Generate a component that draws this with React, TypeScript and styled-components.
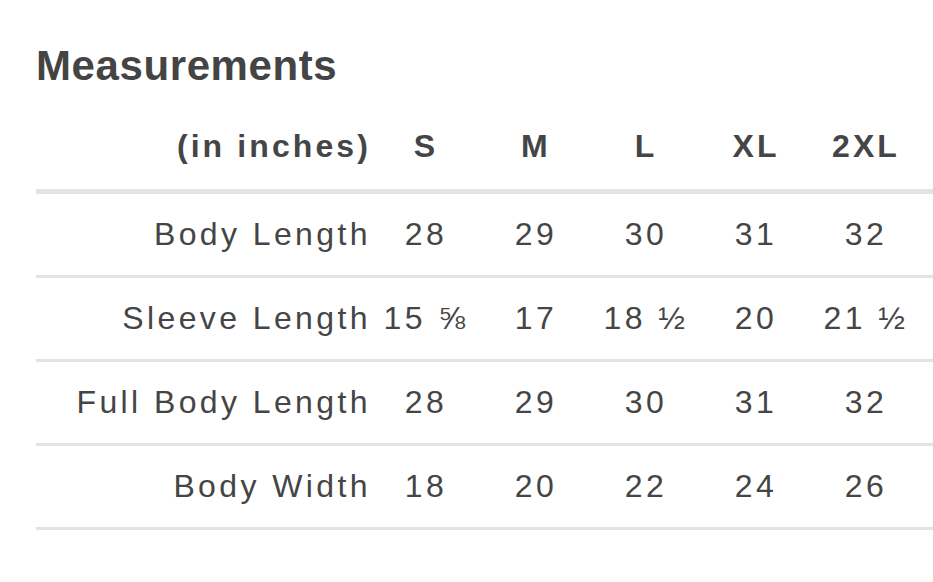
import React from "react";
import styled, { createGlobalStyle } from "styled-components";

const Global = createGlobalStyle`
  html, body { margin: 0; padding: 0; background: #ffffff; }
  body { font-family: "Liberation Sans", Arial, sans-serif; color: #444444; }
`;

const Page = styled.div`
  padding: 40px 0 0 36px;
  overflow: hidden;
`;

const Title = styled.h2`
  margin: 0;
  font-size: 42px;
  font-weight: 700;
  letter-spacing: 0.6px;
  color: #444444;
  line-height: 52px;
`;

const Table = styled.div`
  margin-top: 12px;
  width: 897px;
  font-size: 32px;
  color: #454545;
`;

const Row = styled.div<{ $head?: boolean }>`
  display: grid;
  grid-template-columns: 335px repeat(5, 110px) 1fr;
  align-items: center;
  height: ${(p) => (p.$head ? "85px" : "81px")};
  border-bottom: ${(p) => (p.$head ? "5px" : "3px")} solid #e3e3e6;
  font-weight: ${(p) => (p.$head ? 700 : 400)};
  letter-spacing: ${(p) => (p.$head ? "3.1px" : "3.4px")};
`;

const Label = styled.div`
  text-align: right;
  white-space: nowrap;
`;

const Cell = styled.div`
  text-align: center;
  white-space: nowrap;
`;

const sizes = ["S", "M", "L", "XL", "2XL"];
const rows: [string, string[]][] = [
  ["Body Length", ["28", "29", "30", "31", "32"]],
  ["Sleeve Length", ["15 ⅝", "17", "18 ½", "20", "21 ½"]],
  ["Full Body Length", ["28", "29", "30", "31", "32"]],
  ["Body Width", ["18", "20", "22", "24", "26"]],
];

export default function App() {
  return (
    <>
      <Global />
      <Page>
        <Title>Measurements</Title>
        <Table>
          <Row $head>
            <Label>(in inches)</Label>
            {sizes.map((s) => (
              <Cell key={s}>{s}</Cell>
            ))}
          </Row>
          {rows.map(([label, vals]) => (
            <Row key={label}>
              <Label>{label}</Label>
              {vals.map((v, i) => (
                <Cell key={i}>{v}</Cell>
              ))}
            </Row>
          ))}
        </Table>
      </Page>
    </>
  );
}
